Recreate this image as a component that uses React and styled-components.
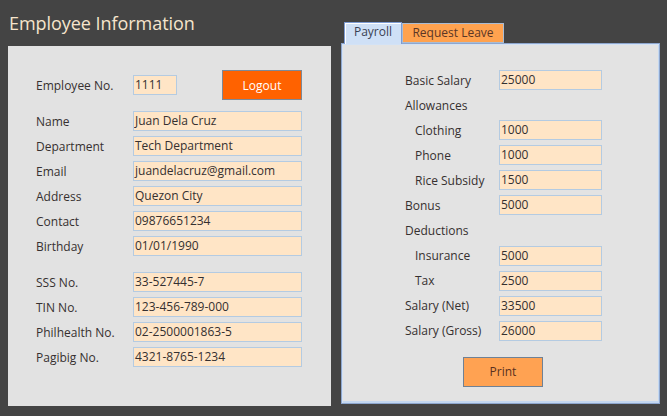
import React from "react";
import styled, { createGlobalStyle } from "styled-components";

const Global = createGlobalStyle`
  html, body { margin: 0; padding: 0; background: #444444; }
  body { font-family: "Open Sans", "Noto Sans", sans-serif; }
`;

const Page = styled.div`
  width: 667px;
  height: 416px;
  background: #444444;
  display: flex;
  align-items: flex-start;
  gap: 10px;
  padding-left: 8px;
  box-sizing: border-box;
  overflow: hidden;
`;

const LeftColumn = styled.div`
  display: flex;
  flex-direction: column;
`;

const Title = styled.h1`
  margin: 0;
  height: 46px;
  padding: 11px 0 0 1px;
  box-sizing: border-box;
  font-family: "Open Sans", sans-serif;
  font-weight: 400;
  font-size: 18px;
  line-height: 24px;
  color: #f6e4cc;
  letter-spacing: -0.05px;
`;

const Panel = styled.div`
  width: 323px;
  height: 360px;
  background: #e2e2e2;
  box-sizing: border-box;
  padding: 24px 29px 0 28px;
  display: flex;
  flex-direction: column;
`;

const TopRow = styled.div`
  display: flex;
  align-items: center;
  height: 30px;
  margin-bottom: 11px;
`;

const Group = styled.div`
  display: flex;
  flex-direction: column;
  gap: ${(p) => p.$gap || 5}px;
  margin-bottom: ${(p) => p.$after || 0}px;
`;

const Row = styled.div`
  display: flex;
  align-items: center;
  height: 20px;
`;

const Label = styled.span`
  width: ${(p) => p.$w}px;
  padding-left: ${(p) => (p.$indent ? 10 : 0)}px;
  box-sizing: border-box;
  flex-shrink: 0;
  font-size: 12px;
  color: #363030;
  letter-spacing: 0;
  white-space: nowrap;
`;

const Field = styled.div`
  width: ${(p) => p.$w}px;
  height: 20px;
  box-sizing: border-box;
  border: 1px solid #b4cbe2;
  background: #ffe5c6;
  padding: 0 1px;
  font-size: 12px;
  line-height: 18px;
  color: #353030;
  letter-spacing: 0;
  white-space: nowrap;
  overflow: hidden;
`;

const Button = styled.button`
  width: 80px;
  height: 30px;
  box-sizing: border-box;
  border: 1px solid ${(p) => p.$border};
  background: ${(p) => p.$bg};
  color: ${(p) => p.$color};
  font-family: "Open Sans", sans-serif;
  font-size: 12px;
  padding: 0;
  margin-left: ${(p) => p.$ml || 0}px;
`;

const RightColumn = styled.div`
  margin-top: 22px;
  display: flex;
  flex-direction: column;
`;

const Tabs = styled.div`
  display: flex;
  align-items: flex-end;
  padding-left: 3px;
  height: 21px;
  position: relative;
  z-index: 1;
`;

const Tab = styled.div`
  box-sizing: border-box;
  height: ${(p) => (p.$active ? 22 : 20)}px;
  margin-bottom: ${(p) => (p.$active ? -1 : 0)}px;
  width: ${(p) => p.$w}px;
  background: ${(p) => (p.$active ? "#cfe0f6" : "#ffa24f")};
  border: 1px solid ${(p) => (p.$active ? "#7d9bd2" : "#a9bcd4")};
  border-bottom: ${(p) => (p.$active ? "none" : "1px solid #a9bcd4")};
  box-shadow: ${(p) => (p.$active ? "inset 1px 1px 0 #ffffff" : "none")};
  font-size: 12px;
  line-height: 18px;
  text-align: center;
  color: ${(p) => (p.$active ? "#3a3f52" : "#5b3626")};
  white-space: nowrap;
`;

const TabPanel = styled.div`
  width: 319px;
  height: 361px;
  box-sizing: border-box;
  background: #e3e3e3;
  border: 1px solid #8ea7cf;
  box-shadow: inset 1px 1px 0 #d3e2f5, inset -1px -1px 0 #c4d8f1, inset 0 -2px 0 #c4d8f1;
  padding: 26px 0 0 63px;
  display: flex;
  flex-direction: column;
`;

const PrintRow = styled.div`
  display: flex;
  margin-top: 16px;
  padding-left: 58px;
`;

const personal = [
  ["Name", "Juan Dela Cruz"],
  ["Department", "Tech Department"],
  ["Email", "juandelacruz@gmail.com"],
  ["Address", "Quezon City"],
  ["Contact", "09876651234"],
  ["Birthday", "01/01/1990"],
];

const gov = [
  ["SSS No.", "33-527445-7"],
  ["TIN No.", "123-456-789-000"],
  ["Philhealth No.", "02-2500001863-5"],
  ["Pagibig No.", "4321-8765-1234"],
];

const payroll = [
  { label: "Basic Salary", value: "25000" },
  { label: "Allowances" },
  { label: "Clothing", value: "1000", indent: true },
  { label: "Phone", value: "1000", indent: true },
  { label: "Rice Subsidy", value: "1500", indent: true },
  { label: "Bonus", value: "5000" },
  { label: "Deductions" },
  { label: "Insurance", value: "5000", indent: true },
  { label: "Tax", value: "2500", indent: true },
  { label: "Salary (Net)", value: "33500" },
  { label: "Salary (Gross)", value: "26000" },
];

export default function App() {
  return (
    <>
      <Global />
      <Page>
        <LeftColumn>
          <Title>Employee Information</Title>
          <Panel>
            <TopRow>
              <Label $w={97}>Employee No.</Label>
              <Field $w={44}>1111</Field>
              <Button $ml={45} $bg="#ff6200" $border="#7d8896" $color="#ffffff">
                Logout
              </Button>
            </TopRow>
            <Group $after={16}>
              {personal.map(([l, v]) => (
                <Row key={l}>
                  <Label $w={97}>{l}</Label>
                  <Field $w={169}>{v}</Field>
                </Row>
              ))}
            </Group>
            <Group>
              {gov.map(([l, v]) => (
                <Row key={l}>
                  <Label $w={97}>{l}</Label>
                  <Field $w={169}>{v}</Field>
                </Row>
              ))}
            </Group>
          </Panel>
        </LeftColumn>
        <RightColumn>
          <Tabs>
            <Tab $active $w={58}>Payroll</Tab>
            <Tab $w={102}>Request Leave</Tab>
          </Tabs>
          <TabPanel>
            <Group $gap={5.1}>
              {payroll.map((r) => (
                <Row key={r.label}>
                  <Label $w={94} $indent={r.indent}>{r.label}</Label>
                  {r.value && <Field $w={103}>{r.value}</Field>}
                </Row>
              ))}
            </Group>
            <PrintRow>
              <Button $bg="#ffa252" $border="#6f8195" $color="#5a3020">
                Print
              </Button>
            </PrintRow>
          </TabPanel>
        </RightColumn>
      </Page>
    </>
  );
}
